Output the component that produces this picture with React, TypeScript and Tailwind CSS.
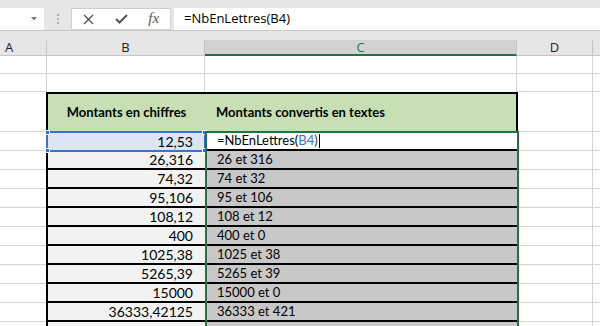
import React from "react"

const montants = [
  { chiffre: "26,316", texte: "26 et 316" },
  { chiffre: "74,32", texte: "74 et 32" },
  { chiffre: "95,106", texte: "95 et 106" },
  { chiffre: "108,12", texte: "108 et 12" },
  { chiffre: "400", texte: "400 et 0" },
  { chiffre: "1025,38", texte: "1025 et 38" },
  { chiffre: "5265,39", texte: "5265 et 39" },
  { chiffre: "15000", texte: "15000 et 0" },
  { chiffre: "36333,42125", texte: "36333 et 421" },
  { chiffre: "", texte: "" },
]

const cellFont = { fontFamily: "Lato, 'Open Sans', sans-serif" }

function Handle({ className }: { className: string }) {
  return <span className={"absolute w-[5px] h-[5px] bg-[#2f6fd6] border border-white " + className} />
}

function FormulaBar() {
  return (
    <div className="h-[30px] bg-[#e6e6e6] flex items-end">
      {/* Name box */}
      <div className="w-[44px] h-[22px] bg-white flex items-center justify-end pr-[7px]">
        <svg width="6" height="4" viewBox="0 0 6 4">
          <path d="M0 0 L6 0 L3 3.5 Z" fill="#7a7a7a" />
        </svg>
      </div>
      <div className="w-[27px] h-[22px] flex flex-col items-center justify-center gap-[2px] pl-[1px]">
        <span className="w-[2px] h-[2px] bg-[#b0b0b0]" />
        <span className="w-[2px] h-[2px] bg-[#b0b0b0]" />
        <span className="w-[2px] h-[2px] bg-[#b0b0b0]" />
      </div>
      {/* Cancel / Enter / Insert function */}
      <div className="w-[100px] h-[22px] bg-white border border-[#d0d0d0] flex items-center">
        <div className="w-[33px] flex justify-center pl-[1px]">
          <svg width="11" height="11" viewBox="0 0 11 11">
            <path d="M1 1 L10 10 M10 1 L1 10" stroke="#505050" strokeWidth="1.3" fill="none" />
          </svg>
        </div>
        <div className="w-[33px] flex justify-center">
          <svg width="13" height="10" viewBox="0 0 13 10">
            <path d="M1 5 L4.5 8.5 L12 1" stroke="#555555" strokeWidth="2" fill="none" />
          </svg>
        </div>
        <div
          className="w-[33px] flex justify-center text-[15px] italic text-[#555] leading-none pb-[1px]"
          style={{ fontFamily: "'Liberation Serif', serif" }}
        >
          fx
        </div>
      </div>
      <div
        className="ml-[3px] flex-1 h-[22px] bg-white flex items-center pl-[10px] text-[13px] text-black"
        style={{ fontFamily: "'Open Sans', sans-serif" }}
      >
        =NbEnLettres(B4)
      </div>
    </div>
  )
}

function ColumnHeaders() {
  return (
    <div className="bg-[#e6e6e6] pt-[9px] border-t border-[#c8c8c8]">
      <div
        className="flex h-[16px] text-[13px] leading-none"
        style={{ fontFamily: "'Open Sans', sans-serif" }}
      >
        <div className="w-[47px] border-r border-b border-[#c6c6c6] flex items-center pl-[5px] text-[#222]">A</div>
        <div className="w-[158px] border-r border-b border-[#c6c6c6] flex items-center justify-center text-[#222]">B</div>
        <div className="w-[312px] bg-[#d2d2d2] border-r border-[#c6c6c6] border-b-2 border-b-[#217346] flex items-center justify-center text-[#217346]">C</div>
        <div className="w-[76px] border-r border-b border-[#c6c6c6] flex items-center justify-center text-[#222]">D</div>
        <div className="flex-1 border-b border-[#c6c6c6]" />
      </div>
    </div>
  )
}

function EmptyRow({ last }: { last?: boolean }) {
  return (
    <div className="flex h-[18px]">
      <div className="w-[47px] border-r border-b border-[#d4d4d4]" />
      <div className={"w-[158px] border-r border-[#d4d4d4] " + (last ? "" : "border-b")} />
      <div className={"w-[312px] border-r border-[#d4d4d4] " + (last ? "" : "border-b")} />
      <div className="w-[76px] border-r border-b border-[#d4d4d4]" />
      <div className="flex-1 border-b border-[#d4d4d4]" />
    </div>
  )
}

export default function App() {
  return (
    <div className="w-[600px] h-[326px] overflow-hidden bg-white">
      <FormulaBar />
      <ColumnHeaders />
      <EmptyRow />
      <EmptyRow last />

      {/* Table header */}
      <div className="flex h-[40px]">
        <div className="w-[46px] border-b border-[#d4d4d4]" />
        <div
          className="w-[159px] bg-[#c6e0b4] border-l-2 border-t-2 border-black flex items-center justify-center font-bold text-[13px] text-black"
          style={cellFont}
        >
          Montants en chiffres
        </div>
        <div
          className="w-[313px] bg-[#c6e0b4] border-r-2 border-t-2 border-black flex items-center pl-[11px] font-bold text-[13px] text-black"
          style={cellFont}
        >
          Montants convertis en textes
        </div>
        <div className="w-[75px] border-r border-b border-[#d4d4d4]" />
        <div className="flex-1 border-b border-[#d4d4d4]" />
      </div>

      {/* Active row */}
      <div className="flex h-[19px]">
        <div className="w-[46px] border-b border-[#d4d4d4]" />
        <div
          className="relative w-[159px] bg-[#dce6f2] border-l-2 border-black flex items-center justify-end pr-[12px] text-[14px] text-black"
          style={cellFont}
        >
          12,53
          <div className="absolute -top-[1px] -left-[2px] -right-[1px] -bottom-[1px] border-2 border-[#3a70d0] z-10">
            <Handle className="-top-[3px] -left-[3px]" />
            <Handle className="-top-[3px] -right-[3px]" />
            <Handle className="-bottom-[3px] -left-[3px]" />
            <Handle className="-bottom-[3px] -right-[3px]" />
          </div>
        </div>
        <div
          className="relative w-[313px] bg-white border-b-2 border-black flex items-center pl-[12px] text-[13px] text-black"
          style={cellFont}
        >
          <span>=NbEnLettres(</span>
          <span className="text-[#3a70d0]">B4</span>
          <span className="text-[#4a3a2a]">)</span>
          <span className="ml-[1px] w-[1px] h-[14px] bg-black" />
          <div className="absolute -top-[1px] left-0 -right-[1px] h-[400px] border-2 border-[#217346] z-20 pointer-events-none" />
        </div>
        <div className="w-[75px] border-r border-b border-[#d4d4d4]" />
        <div className="flex-1 border-b border-[#d4d4d4]" />
      </div>

      {montants.map((m, i) => (
        <div key={i} className="flex h-[19px]">
          <div className="w-[46px] border-b border-[#d4d4d4]" />
          <div
            className="w-[159px] bg-[#f2f2f2] border-l-2 border-b-2 border-black flex items-center justify-end pr-[12px] text-[14px] text-black"
            style={cellFont}
          >
            {m.chiffre}
          </div>
          <div
            className="w-[313px] bg-[#c8c8c8] border-b-2 border-black flex items-center pl-[12px] text-[13px] text-black"
            style={cellFont}
          >
            {m.texte}
          </div>
          <div className="w-[75px] border-r border-b border-[#d4d4d4]" />
          <div className="flex-1 border-b border-[#d4d4d4]" />
        </div>
      ))}
    </div>
  )
}
